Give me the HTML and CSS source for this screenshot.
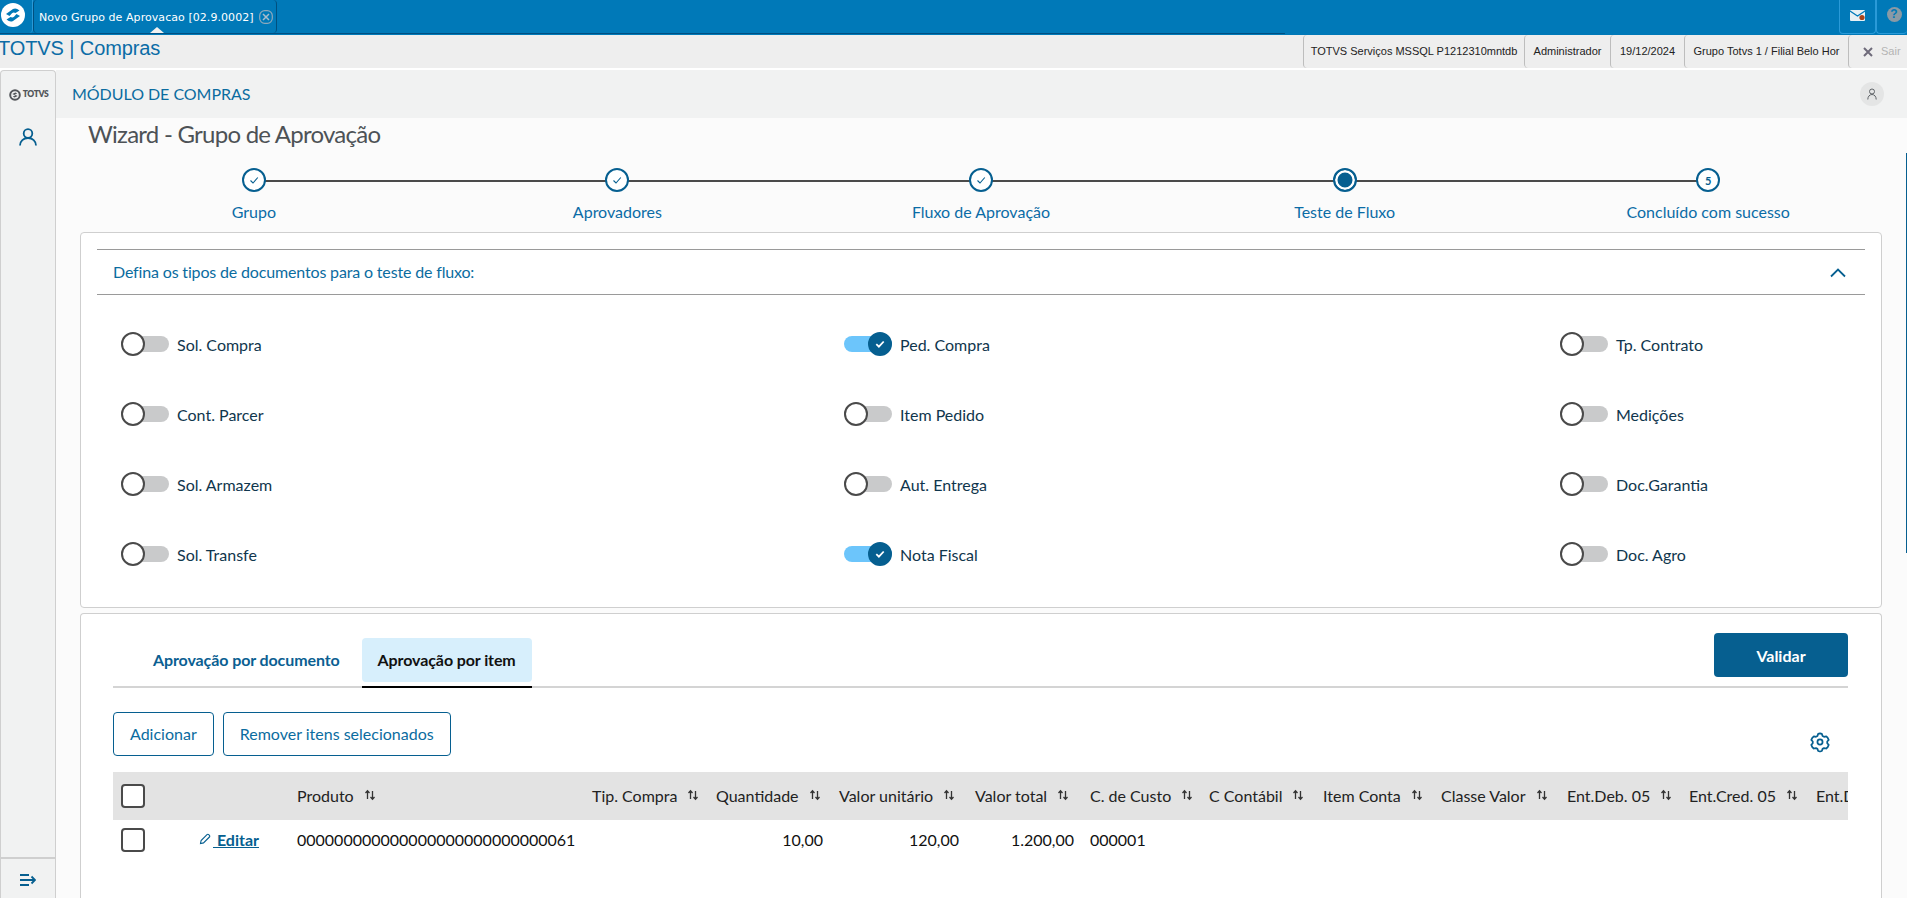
FILE: index.html
```html
<!DOCTYPE html>
<html lang="pt-BR">
<head>
<meta charset="utf-8">
<title>Novo Grupo de Aprovacao</title>
<link rel="stylesheet" href="styles.css">
</head>
<body>
<svg class="sprite" aria-hidden="true">
  <symbol id="i-sort" viewBox="0 0 12 12"><path d="M3.500 10V2M1.500 4l2-2.200 2 2.200" fill="none" stroke="#333" stroke-width="1.300"/><path d="M8.500 2v8M6.500 8l2 2.200 2-2.200" fill="none" stroke="#333" stroke-width="1.300"/></symbol>
  <symbol id="i-step" viewBox="0 0 12 12"><path d="M2.500 6.500l2.500 2.500 4.800-5.500" fill="none" stroke="#065f90" stroke-width="1.100"/></symbol>
  <symbol id="i-on" viewBox="0 0 12 12"><path d="M2.300 6.200l2.600 2.500 4.800-5.200" fill="none" stroke="#fff" stroke-width="1.800"/></symbol>
</svg>
<header class="tabbar">
  <div class="tabbar-left">
    <div class="logo-slot">
      <svg class="app-logo" viewBox="0 0 24 24"><circle cx="12" cy="12" r="12" fill="#fff"/><path d="M5 11 L12 6 Q15 4.500 18.500 7.500 L14.500 10 Q12.500 9 11 10.200 L8.500 13 Z" fill="#0079b8"/><path d="M19 13 L12 18 Q9 19.500 5.500 16.500 L9.500 14 Q11.500 15 13 13.800 L15.500 11 Z" fill="#0079b8"/></svg>
    </div>
    <div class="doc-tab">
      <span class="doc-tab-title">Novo Grupo de Aprovacao [02.9.0002]</span>
      <svg class="doc-tab-close" viewBox="0 0 14 14"><rect x=".7" y=".7" width="12.600" height="12.600" rx="5" fill="none" stroke="#8fa9bb" stroke-width="1.200"/><path d="M4 4l6 6M10 4l-6 6" stroke="#a9bccb" stroke-width="1.500"/></svg>
      <span class="doc-tab-notch"></span>
    </div>
  </div>
  <div class="tabbar-right">
    <div class="top-btn top-btn-mail">
      <svg viewBox="0 0 15 11" width="15" height="11"><rect width="15" height="11" rx="1" fill="#e8f0f4"/><path d="M0 1l7.500 5L15 1" fill="none" stroke="#0079b8" stroke-width="1.300"/><circle cx="12" cy="7.500" r="2.600" fill="#a8431a"/></svg>
    </div>
    <div class="top-btn top-btn-help"><span class="help-dot">?</span></div>
  </div>
</header>

<div class="toolbar">
  <div class="app-name">TOTVS | Compras</div>
  <div class="info-tabs">
    <div class="info-tab info-env">TOTVS Serviços MSSQL P1212310mntdb</div>
    <div class="info-tab info-user">Administrador</div>
    <div class="info-tab info-date">19/12/2024</div>
    <div class="info-tab info-branch">Grupo Totvs 1 / Filial Belo Hor</div>
    <div class="info-tab info-exit"><svg viewBox="0 0 10 10" width="10" height="10"><path d="M1 1l8 8M9 1l-8 8" stroke="#6e6a7a" stroke-width="2"/></svg><span class="exit-label">Sair</span></div>
  </div>
</div>

<div class="shell">
  <aside class="sidebar">
    <div class="side-logo">
      <svg viewBox="0 0 12 12" width="12" height="12"><circle cx="6" cy="6" r="4.800" fill="none" stroke="#53565a" stroke-width="2"/><path d="M3.300 5l3-1.600 2 .9-3 1.600zM8.700 7l-3 1.600-2-.9 3-1.600z" fill="#53565a"/></svg>
      <span class="side-logo-text">TOTVS</span>
    </div>
    <div class="side-user">
      <svg viewBox="0 0 18 18" width="18" height="18"><circle cx="9" cy="5.500" r="4.300" fill="none" stroke="#065f90" stroke-width="1.800"/><path d="M1 17.500c0-4.500 3.500-7.500 8-7.500s8 3 8 7.500" fill="none" stroke="#065f90" stroke-width="1.800"/></svg>
    </div>
    <div class="side-spacer"></div>
    <div class="side-toggle">
      <svg viewBox="0 0 16 12" width="16" height="12"><path d="M0 1h9M0 6h15M0 11h9" stroke="#065f90" stroke-width="1.800"/><path d="M11.500 2.500L15 6l-3.500 3.500" fill="none" stroke="#065f90" stroke-width="1.800"/></svg>
    </div>
  </aside>

  <main class="main">
    <div class="module-bar">
      <span class="module-title">MÓDULO DE COMPRAS</span>
      <span class="avatar"><svg viewBox="0 0 12 12" width="12" height="12"><circle cx="6" cy="3.500" r="2.500" fill="none" stroke="#5f6368" stroke-width="1"/><path d="M1.800 11.500c0-3 1.800-5 4.200-5s4.200 2 4.200 5" fill="none" stroke="#5f6368" stroke-width="1"/></svg></span>
    </div>

    <div class="content">
      <span class="page-scroll"></span>
      <h1 class="page-title">Wizard - Grupo de Aprovação</h1>

      <ol class="stepper">
        <li class="step"><span class="step-dot"><svg width="12" height="12"><use href="#i-step"/></svg></span><span class="step-label">Grupo</span></li>
        <li class="step"><span class="step-dot"><svg width="12" height="12"><use href="#i-step"/></svg></span><span class="step-label">Aprovadores</span></li>
        <li class="step"><span class="step-dot"><svg width="12" height="12"><use href="#i-step"/></svg></span><span class="step-label">Fluxo de Aprovação</span></li>
        <li class="step"><span class="step-dot step-dot-active"></span><span class="step-label">Teste de Fluxo</span></li>
        <li class="step"><span class="step-dot step-dot-num">5</span><span class="step-label">Concluído com sucesso</span></li>
      </ol>

      <section class="card card-docs">
        <div class="accordion">
          <span class="accordion-title">Defina os tipos de documentos para o teste de fluxo:</span>
          <svg class="chevron" viewBox="0 0 16 10" width="16" height="10"><path d="M1 8.500l7-7 7 7" fill="none" stroke="#065f90" stroke-width="1.800"/></svg>
        </div>
        <div class="switch-grid">
          <div class="switch"><span class="track"><span class="knob"></span></span><span class="switch-label">Sol. Compra</span></div>
          <div class="switch"><span class="track track-on"><span class="knob knob-on"><svg width="12" height="12"><use href="#i-on"/></svg></span></span><span class="switch-label">Ped. Compra</span></div>
          <div class="switch"><span class="track"><span class="knob"></span></span><span class="switch-label">Tp. Contrato</span></div>
          <div class="switch"><span class="track"><span class="knob"></span></span><span class="switch-label">Cont. Parcer</span></div>
          <div class="switch"><span class="track"><span class="knob"></span></span><span class="switch-label">Item Pedido</span></div>
          <div class="switch"><span class="track"><span class="knob"></span></span><span class="switch-label">Medições</span></div>
          <div class="switch"><span class="track"><span class="knob"></span></span><span class="switch-label">Sol. Armazem</span></div>
          <div class="switch"><span class="track"><span class="knob"></span></span><span class="switch-label">Aut. Entrega</span></div>
          <div class="switch"><span class="track"><span class="knob"></span></span><span class="switch-label">Doc.Garantia</span></div>
          <div class="switch"><span class="track"><span class="knob"></span></span><span class="switch-label">Sol. Transfe</span></div>
          <div class="switch"><span class="track track-on"><span class="knob knob-on"><svg width="12" height="12"><use href="#i-on"/></svg></span></span><span class="switch-label">Nota Fiscal</span></div>
          <div class="switch"><span class="track"><span class="knob"></span></span><span class="switch-label">Doc. Agro</span></div>
        </div>
      </section>

      <section class="card card-items">
        <div class="tabs-row">
          <div class="tab">Aprovação por documento</div>
          <div class="tab tab-active">Aprovação por item</div>
          <button class="btn-primary">Validar</button>
        </div>
        <div class="actions-row">
          <button class="btn-outline">Adicionar</button>
          <button class="btn-outline">Remover itens selecionados</button>
          <svg class="gear" viewBox="0 0 24 24" width="22" height="22"><path d="M12 2.500l2 .6.800 2.300 1.600.9 2.400-.5 1.500 1.500.1.100 1.100 2.300-1.600 1.800v1.900l1.600 1.800-1.100 2.400-1.600 1.500-2.400-.5-1.600.9-.8 2.300-2 .6-2-.6-.8-2.300-1.600-.9-2.400.5-1.600-1.500-1.100-2.400 1.600-1.800v-1.900l-1.600-1.800 1.100-2.300 1.700-1.600 2.300.5 1.600-.9.800-2.300z" fill="none" stroke="#065f90" stroke-width="1.900" stroke-linejoin="round"/><circle cx="12" cy="12" r="2.800" fill="none" stroke="#065f90" stroke-width="1.900"/></svg>
        </div>
        <div class="table">
          <div class="row row-head">
            <div class="cell cell-check"><span class="checkbox"></span></div>
            <div class="cell"></div>
            <div class="cell">Produto<svg class="sort" width="12" height="12"><use href="#i-sort"/></svg></div>
            <div class="cell">Tip. Compra<svg class="sort" width="12" height="12"><use href="#i-sort"/></svg></div>
            <div class="cell">Quantidade<svg class="sort" width="12" height="12"><use href="#i-sort"/></svg></div>
            <div class="cell">Valor unitário<svg class="sort" width="12" height="12"><use href="#i-sort"/></svg></div>
            <div class="cell">Valor total<svg class="sort" width="12" height="12"><use href="#i-sort"/></svg></div>
            <div class="cell">C. de Custo<svg class="sort" width="12" height="12"><use href="#i-sort"/></svg></div>
            <div class="cell">C Contábil<svg class="sort" width="12" height="12"><use href="#i-sort"/></svg></div>
            <div class="cell">Item Conta<svg class="sort" width="12" height="12"><use href="#i-sort"/></svg></div>
            <div class="cell">Classe Valor<svg class="sort" width="12" height="12"><use href="#i-sort"/></svg></div>
            <div class="cell">Ent.Deb. 05<svg class="sort" width="12" height="12"><use href="#i-sort"/></svg></div>
            <div class="cell">Ent.Cred. 05<svg class="sort" width="12" height="12"><use href="#i-sort"/></svg></div>
            <div class="cell">Ent.Deb. 06<svg class="sort" width="12" height="12"><use href="#i-sort"/></svg></div>
          </div>
          <div class="row row-body">
            <div class="cell cell-check"><span class="checkbox"></span></div>
            <div class="cell cell-edit"><svg viewBox="0 0 12 12" width="12" height="12"><path d="M1.500 10.500l.6-3L8 1.600a1.200 1.200 0 0 1 1.700 0l.7.7a1.200 1.200 0 0 1 0 1.700L4.500 9.900z" fill="none" stroke="#065f90" stroke-width="1.100"/></svg><a class="edit-link" href="#"> Editar</a></div>
            <div class="cell">000000000000000000000000000061</div>
            <div class="cell"></div>
            <div class="cell cell-num">10,00</div>
            <div class="cell cell-num">120,00</div>
            <div class="cell cell-num">1.200,00</div>
            <div class="cell">000001</div>
          </div>
        </div>
      </section>
    </div>
  </main>
</div>
</body>
</html>
```

FILE: styles.css
```css
* { box-sizing: border-box; }
html, body { margin: 0; height: 100%; }
body {
  width: 1907px;
  height: 898px;
  overflow: hidden;
  background: #fff;
  font-family: "Lato", sans-serif;
  color: #1f2a30;
}
.sprite { display: none; }

/* top tab bar */
.tabbar {
  height: 35px;
  background: #0079b8;
  display: flex;
  justify-content: space-between;
}
.tabbar-left {
  width: 1285px;
  height: 34px;
  border-bottom: 1px solid #004f82;
  display: flex;
}
.logo-slot {
  width: 33px;
  height: 33px;
  border-right: 1px solid #2a9ad8;
  border-bottom-right-radius: 4px;
  padding: 3px 0 0 1px;
}
.app-logo { width: 24px; height: 24px; display: block; }
.doc-tab {
  width: 244px;
  height: 33px;
  display: flex;
  align-items: center;
  padding: 1px 0 0 5px;
  border-right: 1px solid #00507f;
  border-left: 1px solid #00507f;
  border-radius: 4px;
  position: relative;
  color: #fff;
}
.doc-tab-title {
  font-family: "DejaVu Sans", sans-serif;
  font-size: 11px;
  letter-spacing: .06px;
  white-space: nowrap;
  width: 220px;
}
.doc-tab-close { width: 14px; height: 14px; margin-top: -1px; }
.doc-tab-notch {
  position: absolute;
  left: 116px;
  bottom: 0;
  width: 0;
  height: 0;
  border-left: 7px solid transparent;
  border-right: 7px solid transparent;
  border-bottom: 6px solid #f0f0f0;
}
.tabbar-right { display: flex; height: 34px; }
.top-btn {
  height: 34px;
  border: 1px solid #2a9ad8;
  border-top: 0;
  border-radius: 0 0 4px 4px;
  display: flex;
  align-items: center;
  justify-content: center;
}
.top-btn-mail { width: 37px; padding-bottom: 2px; }
.top-btn-help { width: 31px; border-right: 0; padding: 0 0 4px 4px; }
.help-dot {
  width: 15px;
  height: 15px;
  border-radius: 50%;
  background: #8a9aa5;
  color: #0079b8;
  font: bold 12px/15px "Liberation Sans", sans-serif;
  text-align: center;
}

/* toolbar */
.toolbar {
  height: 33px;
  background: #eeeeee;
  display: flex;
  justify-content: space-between;
}
.app-name {
  font-family: "Liberation Sans", sans-serif;
  font-size: 20px;
  line-height: 26px;
  color: #0b6ca6;
  margin-left: -2px;
  letter-spacing: -.1px;
}
.info-tabs { display: flex; }
.info-tab {
  font-family: "Liberation Sans", sans-serif;
  font-size: 11px;
  color: #222;
  height: 33px;
  line-height: 33px;
  white-space: nowrap;
  border-left: 1px solid #bdbdbd;
  border-radius: 4px 0 0 4px;
  text-align: center;
}
.info-env { width: 221px; }
.info-user { width: 86px; }
.info-date { width: 74px; }
.info-branch { width: 164px; }
.info-exit {
  width: 59px;
  display: flex;
  align-items: center;
  gap: 8px;
  padding-left: 14px;
}
.exit-label { color: #b4b4b4; }

/* shell */
.shell {
  margin-top: 2px;
  height: 828px;
  display: flex;
}
.sidebar {
  width: 56px;
  background: #f1f2f2;
  border: 1px solid #cfcfcf;
  border-bottom: 0;
  border-radius: 4px 4px 0 0;
  display: flex;
  flex-direction: column;
  align-items: center;
}
.side-logo {
  height: 46px;
  display: flex;
  align-items: center;
  gap: 2px;
  padding: 1px 0 0 1px;
}
.side-logo-text {
  font: 800 8.500px/1 "Lato", sans-serif;
  color: #53565a;
  letter-spacing: -.4px;
}
.side-user { margin-top: 11px; height: 18px; }
.side-spacer { flex: 1; }
.side-toggle {
  width: 100%;
  height: 41px;
  border-top: 2px solid #cfcfcf;
  display: flex;
  align-items: center;
  justify-content: center;
  padding-top: 2px;
}

.main { flex: 1; display: flex; flex-direction: column; min-width: 0; }
.module-bar {
  height: 48px;
  background: #f1f2f2;
  padding: 0 23px 0 16px;
  display: flex;
  align-items: center;
  justify-content: space-between;
  flex-shrink: 0;
}
.module-title { font-size: 16px; color: #0b6ca0; margin-bottom: 2px; letter-spacing: -.03px; }
.avatar {
  width: 24px;
  height: 24px;
  border-radius: 50%;
  background: #e4e5e5;
  display: flex;
  align-items: center;
  justify-content: center;
}

.content {
  flex: 1;
  background: #fbfbfb;
  position: relative;
  padding: 0 25px 0 24px;
  min-height: 0;
  overflow: hidden;
}
.page-scroll {
  position: absolute;
  right: 0;
  top: 35px;
  width: 1px;
  height: 400px;
  background: #065f90;
}
.page-title {
  margin: 0 0 0 8px;
  font-size: 24px;
  font-weight: 400;
  line-height: 32px;
  color: #4d5256;
  letter-spacing: -.75px;
}

/* stepper */
.stepper {
  list-style: none;
  padding: 18px 0 0;
  display: grid;
  grid-template-columns: repeat(5, 1fr);
  width: 1818px;
  margin: 0 0 0 -8px;
  height: 82px;
}
.step {
  display: flex;
  flex-direction: column;
  align-items: center;
  position: relative;
}
.step::after {
  content: "";
  position: absolute;
  top: 12px;
  left: 50%;
  width: 100%;
  height: 2px;
  background: #4a4a4a;
}
.step:last-child::after { display: none; }
.step-dot {
  width: 24px;
  height: 24px;
  border: 2px solid #065f90;
  border-radius: 50%;
  background: #fff;
  display: flex;
  align-items: center;
  justify-content: center;
  position: relative;
  z-index: 1;
  font-size: 11px;
  font-weight: 700;
  color: #065f90;
}
.step-dot-active {
  background: #065f90;
  box-shadow: inset 0 0 0 2.500px #fff;
}
.step-label {
  margin-top: 10px;
  font-size: 16px;
  line-height: 20px;
  color: #0b6ca6;
  white-space: nowrap;
}

/* cards */
.card {
  background: #fff;
  border: 1px solid #cfcfcf;
  border-radius: 4px;
}
.card-docs { height: 376px; padding: 16px 16px 0; }
.accordion {
  height: 46px;
  border-top: 1px solid #9a9a9a;
  border-bottom: 1px solid #9a9a9a;
  display: flex;
  align-items: center;
  justify-content: space-between;
  padding: 0 19px 0 16px;
}
.accordion-title { font-size: 16px; color: #0b6ca0; letter-spacing: -.16px; margin-bottom: 2px; }
.chevron { margin-top: 1px; }
.switch-grid {
  margin-top: 14px;
  padding-left: 24px;
  display: grid;
  grid-template-columns: 723px 716px auto;
  grid-auto-rows: 70px;
}
.switch { display: flex; align-items: center; gap: 8px; height: 70px; }
.track {
  width: 48px;
  height: 16px;
  border-radius: 8px;
  background: #c9cacb;
  position: relative;
  display: block;
}
.track-on { background: #6cc5fb; }
.knob {
  position: absolute;
  left: 0;
  top: -4px;
  width: 24px;
  height: 24px;
  border-radius: 50%;
  background: #fff;
  border: 2px solid #4a4a4a;
  display: flex;
  align-items: center;
  justify-content: center;
}
.knob-on { left: 24px; background: #065f90; border-color: #065f90; }
.switch-label { font-size: 16px; color: #10364d; white-space: nowrap; }

.card-items { margin-top: 5px; height: 300px; padding: 20px 33px 0 32px; border-bottom: 0; }
.tabs-row {
  height: 54px;
  border-bottom: 2px solid #d4d4d4;
  display: flex;
  align-items: flex-start;
  padding-top: 4px;
  position: relative;
}
.tab {
  font-size: 16px;
  font-weight: 700;
  line-height: 44px;
  height: 44px;
  color: #0b5f92;
  padding: 0 16px;
  margin-left: 24px;
  letter-spacing: -.1px;
  white-space: nowrap;
}
.tab-active {
  margin-left: 6px;
  color: #111;
  background: #d7effc;
  border-radius: 4px;
  position: relative;
  width: 170px;
  text-align: center;
}
.tab-active::after {
  content: "";
  position: absolute;
  left: 0;
  right: 0;
  bottom: -6px;
  height: 2px;
  background: #000;
}
.btn-primary {
  position: absolute;
  right: 0;
  top: -1px;
  width: 134px;
  height: 44px;
  background: #065f90;
  color: #fff;
  border: 0;
  border-radius: 4px;
  font: 700 16px "Lato", sans-serif;
}
.actions-row {
  display: flex;
  align-items: flex-start;
  gap: 9px;
  height: 84px;
  padding-top: 24px;
  position: relative;
}
.btn-outline {
  height: 44px;
  padding: 0 16px 2px;
  background: #fff;
  border: 1px solid #065f90;
  border-radius: 4px;
  font: 400 16px "Lato", sans-serif;
  color: #0b6ca0;
}
.gear { position: absolute; right: 17px; top: 43px; }

/* table */
.table { width: 1735px; overflow: hidden; font-size: 16px; }
.row {
  display: grid;
  grid-template-columns: 78px 98px 295px 124px 123px 136px 115px 119px 114px 118px 126px 122px 127px 120px;
  align-items: center;
  width: 1815px;
}
.row-head { height: 48px; background: #e3e3e3; color: #222; }
.row-body { height: 40px; color: #111; }
.cell {
  padding: 0 8px 2px;
  white-space: nowrap;
  display: flex;
  align-items: center;
}
.cell-check { padding-bottom: 0; }
.cell-num { justify-content: flex-end; }
.cell-edit { padding-left: 8px; gap: 2px; }
.edit-link { color: #065f90; font-weight: 700; text-decoration: underline; white-space: pre; }
.sort { margin-left: 10px; flex-shrink: 0; }
.checkbox {
  width: 24px;
  height: 24px;
  border: 2px solid #4a4a4a;
  border-radius: 4px;
  background: #fff;
  display: block;
}
```
